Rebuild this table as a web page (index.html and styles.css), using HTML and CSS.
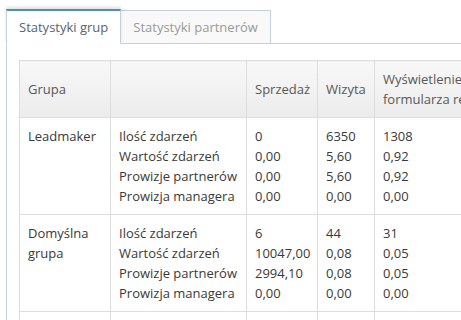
FILE: index.html
```html
<!DOCTYPE html>
<html lang="pl">
<head>
<meta charset="utf-8">
<title>Statystyki</title>
<link rel="stylesheet" href="styles.css">
</head>
<body>
<div class="tabbable">
  <ul class="nav-tabs">
    <li class="tab active">Statystyki grup</li>
    <li class="tab">Statystyki partnerów</li>
  </ul>
  <div class="tab-content">
    <table class="stats">
      <colgroup>
        <col class="c-group">
        <col class="c-label">
        <col class="c-sale">
        <col class="c-visit">
        <col class="c-form">
        <col class="c-rest">
      </colgroup>
      <thead>
        <tr>
          <th>Grupa</th>
          <th></th>
          <th>Sprzedaż</th>
          <th>Wizyta</th>
          <th>Wyświetlenie<br>formularza rejestracji</th>
          <th>Rejestracja</th>
        </tr>
      </thead>
      <tbody>
        <tr>
          <td>Leadmaker</td>
          <td>Ilość zdarzeń<br>Wartość zdarzeń<br>Prowizje partnerów<br>Prowizja managera</td>
          <td>0<br>0,00<br>0,00<br>0,00</td>
          <td>6350<br>5,60<br>5,60<br>0,00</td>
          <td>1308<br>0,92<br>0,92<br>0,00</td>
          <td>0<br>0,00<br>0,00<br>0,00</td>
        </tr>
        <tr>
          <td>Domyślna grupa</td>
          <td>Ilość zdarzeń<br>Wartość zdarzeń<br>Prowizje partnerów<br>Prowizja managera</td>
          <td>6<br>10047,00<br>2994,10<br>0,00</td>
          <td>44<br>0,08<br>0,08<br>0,00</td>
          <td>31<br>0,05<br>0,05<br>0,00</td>
          <td>0<br>0,00<br>0,00<br>0,00</td>
        </tr>
        <tr>
          <td>Razem</td>
          <td>Ilość zdarzeń<br>Wartość zdarzeń<br>Prowizje partnerów<br>Prowizja managera</td>
          <td>6<br>10047,00<br>2994,10<br>0,00</td>
          <td>6394<br>5,68<br>5,68<br>0,00</td>
          <td>1339<br>0,97<br>0,97<br>0,00</td>
          <td>0<br>0,00<br>0,00<br>0,00</td>
        </tr>
      </tbody>
    </table>
  </div>
</div>
</body>
</html>
```

FILE: styles.css
```css
html, body {
  margin: 0;
  padding: 0;
  background: #fff;
  overflow: hidden;
}

body {
  font-family: "Open Sans", "Liberation Sans", sans-serif;
  font-size: 13px;
  color: #393939;
  padding: 9px 0 0 6px;
}

.tabbable {
  width: 760px;
}

.nav-tabs {
  list-style: none;
  margin: 0;
  padding: 0;
  display: flex;
  align-items: flex-end;
  border-bottom: 1px solid #c5d0dc;
  position: relative;
  z-index: 1;
}

.tab {
  margin-bottom: -1px;
  padding: 7px 12px;
  line-height: 18px;
  border: 1px solid #c5d0dc;
  background: #f9f9f9;
  color: #999;
  white-space: nowrap;
}

.tab + .tab {
  margin-left: -1px;
}

.tab.active {
  border-top: 2px solid #4c8fbd;
  border-bottom-color: #fff;
  background: #fff;
  color: #576373;
  position: relative;
  z-index: 2;
  box-shadow: 0 -2px 3px 0 rgba(0, 0, 0, 0.12);
}

.tab-content {
  border: 1px solid #c5d0dc;
  border-top: 0;
  padding: 16px 12px;
  background: #fff;
}

.stats {
  border-collapse: collapse;
  table-layout: fixed;
  width: 700px;
  border: 1px solid #ddd;
}

.c-group { width: 91px; }
.c-label { width: 136px; }
.c-sale { width: 71px; }
.c-visit { width: 57px; }
.c-form { width: 160px; }
.c-rest { width: 185px; }

.stats th,
.stats td {
  border: 1px solid #ddd;
  padding: 8px;
  line-height: 20px;
  text-align: left;
  white-space: nowrap;
}

.stats th {
  font-weight: normal;
  color: #585858;
  vertical-align: middle;
  background: linear-gradient(to bottom, #f8f8f8 0%, #ececec 100%);
}

.stats td {
  vertical-align: top;
  white-space: normal;
}
```
